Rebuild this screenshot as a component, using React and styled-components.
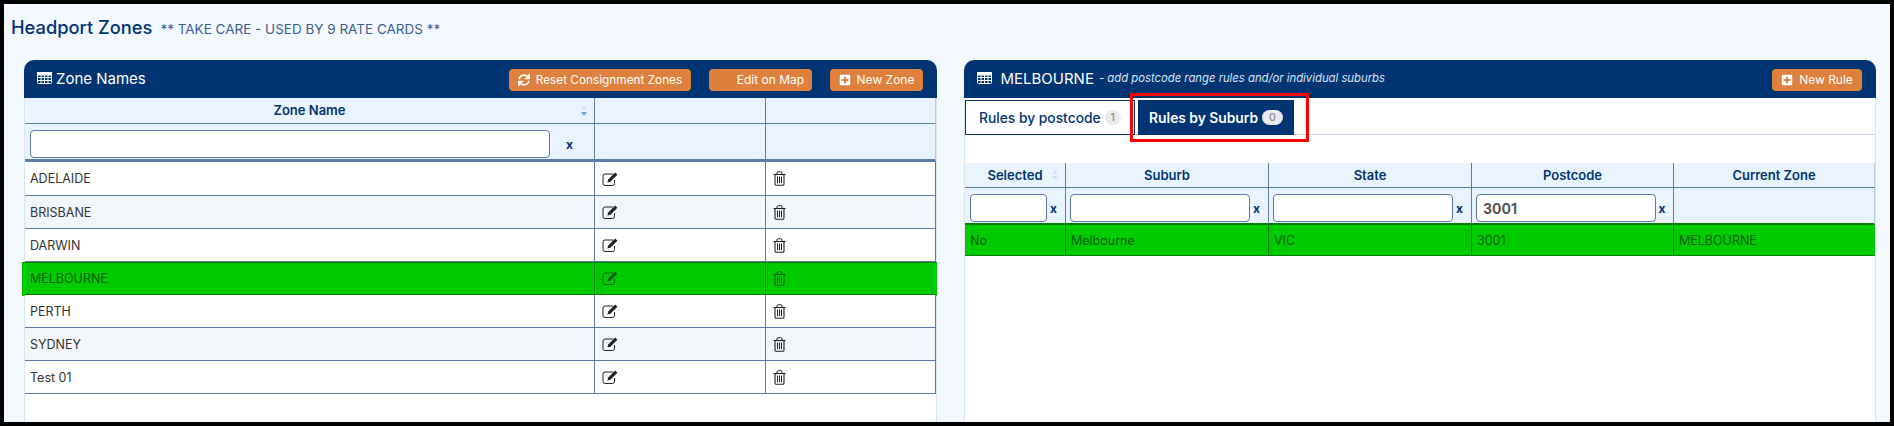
import React from "react";
import styled, { createGlobalStyle } from "styled-components";
import { FaSync, FaPlusSquare } from "react-icons/fa";

const GlobalStyle = createGlobalStyle`
  html, body { margin: 0; padding: 0; }
  body { font-family: Inter, "Noto Sans", sans-serif; }
  * { box-sizing: border-box; }
`;

const navy = "#003473";
const line = "#5b7ba8";
const green = "#00cb00";
const darkGreen = "#0a7a0a";

const Page = styled.div`
  width: 1894px;
  height: 426px;
  border: 4px solid #000;
  background: #f4f8ff;
  overflow: hidden;
  display: flex;
  flex-direction: column;
`;

const TitleBar = styled.div`
  height: 56px;
  padding: 12px 0 0 7px;
  display: flex;
  align-items: baseline;
  gap: 8px;
`;

const PageTitle = styled.h1`
  margin: 0;
  font-size: 18.3px;
  font-weight: 500;
  color: ${navy};
`;

const Warning = styled.span`
  font-size: 13.5px;
  font-weight: 400;
  color: #3b5f8f;
`;

const Panels = styled.div`
  flex: 1;
  display: flex;
  gap: 27px;
  padding-left: 20px;
  min-height: 0;
`;

const Panel = styled.section`
  width: ${(p) => p.$width}px;
  background: #fff;
  border-radius: 10px 10px 0 0;
  position: relative;
`;

const PanelHead = styled.header`
  height: 38px;
  background: ${navy};
  border-radius: 10px 10px 0 0;
  display: flex;
  align-items: center;
  color: #fff;
  padding: 0 14px 0 13px;
`;

const PanelTitle = styled.div`
  font-size: 15px;
  font-weight: 400;
  display: flex;
  align-items: center;
  gap: ${(p) => p.$gap}px;
  margin: -2px auto 0 0;
`;

const PanelNote = styled.em`
  font-size: 11.3px;
  font-weight: 400;
  margin-left: 5px;
  color: #dbe8f8;
`;

const ActionButton = styled.button`
  height: 22px;
  width: ${(p) => p.$width}px;
  margin: 1px 0 0 ${(p) => p.$gap || 0}px;
  border: 0;
  border-radius: 4px;
  background: #df813c;
  color: #fff;
  font: 400 12px Inter, sans-serif;
  display: flex;
  align-items: center;
  justify-content: center;
  gap: 6px;
  padding: 0;
  svg { font-size: 12px; }
`;

const ResetLabel = styled.span`
  font-size: 11.8px;
`;

const IconGap = styled.span`
  width: 14px;
`;

const Body = styled.div`
  border-left: 1px solid #dbe4f0;
  border-right: 1px solid #dbe4f0;
  height: 100%;
`;

const Row = styled.div`
  display: grid;
  grid-template-columns: ${(p) => p.$cols};
`;

const HeadCell = styled.div`
  height: ${(p) => p.$height}px;
  background: #e9f4fe;
  border-right: 1px solid ${line};
  border-bottom: 1px solid ${line};
  color: ${navy};
  font-size: 13px;
  font-weight: 600;
  display: flex;
  align-items: center;
  justify-content: center;
  position: relative;
  padding: 0 5px 1px;
  &:last-child { border-right-color: #b9c8dc; }
`;

const FilterCell = styled(HeadCell)`
  justify-content: space-between;
  padding: 5px 5px 0 4px;
  border-bottom: ${(p) => p.$thick}px solid ${(p) => p.$lineColor || line};
  &:first-child { padding-left: 5px; }
`;

const SortMark = styled.span`
  position: absolute;
  right: 7px;
  top: 50%;
  margin-top: -5px;
  width: 6px;
  height: 10px;
  &::before, &::after {
    content: "";
    position: absolute;
    left: 0;
    border-left: 3px solid transparent;
    border-right: 3px solid transparent;
  }
  &::before { top: 0; border-bottom: 4px solid #d6e2f0; }
  &::after { bottom: 0; border-top: 4px solid ${(p) => p.$down}; }
`;

const FilterInput = styled.input`
  width: ${(p) => p.$width}px;
  height: 28px;
  flex: none;
  border: 1px solid ${line};
  border-radius: 4px;
  background: #fff;
  padding: 0 6px;
  font: 700 14px Inter, sans-serif;
  color: #555;
  outline: none;
`;

const Clear = styled.span`
  font-size: 12px;
  font-weight: 700;
  color: ${navy};
  margin: 0 auto;
`;

const DataRow = styled(Row)`
  height: ${(p) => p.$height}px;
  background: ${(p) => (p.$selected ? green : p.$alt ? "#f2f7fc" : "#fff")};
  margin: ${(p) => (p.$bleed ? "0 -1px 0 -3px" : 0)};
  padding-left: ${(p) => (p.$bleed ? 3 : 0)}px;
  position: relative;
  box-shadow: ${(p) => (p.$bleed ? `inset 0 1px 0 ${darkGreen}, 0 1px 0 ${green}` : "none")};
`;

const DataCell = styled.div`
  border-right: 1px solid ${(p) => (p.$selected ? darkGreen : line)};
  border-bottom: 1px solid ${(p) => (p.$selected ? darkGreen : line)};
  font-size: 12.5px;
  color: ${(p) => (p.$selected ? "#075f07" : "#333")};
  display: flex;
  align-items: center;
  padding-left: ${(p) => (p.$icon ? 7 : 5)}px;
  svg { color: ${(p) => (p.$selected ? "#075f07" : "#222")}; }
  &:last-child { border-right-width: ${(p) => (p.$selected ? 0 : 1)}px; }
`;

const Tabs = styled.div`
  display: flex;
  gap: 3px;
  height: 37px;
  padding-top: 2px;
  border-bottom: 1px solid #ccd6e6;
`;

const Tab = styled.div`
  width: ${(p) => p.$width}px;
  height: 35px;
  display: flex;
  align-items: center;
  justify-content: center;
  gap: 4px;
  font-size: 13.8px;
  font-weight: ${(p) => (p.$active ? 600 : 500)};
  background: ${(p) => (p.$active ? navy : "#fff")};
  color: ${(p) => (p.$active ? "#fff" : navy)};
  border: 1px solid ${navy};
`;

const Count = styled.span`
  padding: 0 ${(p) => p.$pad}px;
  height: 15px;
  border-radius: 8px;
  background: #e9ebee;
  color: #888;
  font-size: 10.5px;
  font-weight: 500;
  line-height: 15px;
  text-align: center;
`;

const Spacer = styled.div`
  height: 28px;
`;

const Callout = styled.div`
  position: absolute;
  left: 166px;
  top: 33px;
  width: 179px;
  height: 49px;
  border: 3px solid #f00;
  pointer-events: none;
`;

const TableIcon = () => (
  <svg width="15" height="12" viewBox="0 0 15 12" fill="none" stroke="currentColor" strokeWidth="1">
    <rect x="0.5" y="0.5" width="14" height="11" rx="1" />
    <rect x="0.5" y="0.5" width="14" height="2.5" fill="currentColor" />
    <path d="M0 5.5H15M0 8.5H15M4 3V12M7.5 3V12M11 3V12" />
  </svg>
);

const EditIcon = () => (
  <svg width="16" height="14" viewBox="0 0 16 14">
    <path d="M11 2H3a2 2 0 0 0-2 2v7.5a2 2 0 0 0 2 2h7.5a2 2 0 0 0 2-2V8" fill="none" stroke="currentColor" strokeWidth="1" />
    <path d="M13.2 0.6l2.2 2.2-7 7-3 .8.8-3z" fill="currentColor" />
  </svg>
);

const TrashIcon = () => (
  <svg width="13" height="15" viewBox="0 0 13 15" fill="none" stroke="currentColor">
    <path d="M0.5 3.5H12.5" strokeWidth="1.1" />
    <path d="M4 3.5V2a1.3 1.3 0 0 1 1.3-1.3h2.4A1.3 1.3 0 0 1 9 2v1.5" strokeWidth="1" />
    <path d="M2 3.5V13a1.3 1.3 0 0 0 1.3 1.3h6.4A1.3 1.3 0 0 0 11 13V3.5" strokeWidth="1.1" />
    <path d="M4.5 5.5V12.2M6.5 5.5V12.2M8.5 5.5V12.2" strokeWidth="1" />
  </svg>
);

const zoneCols = "570px 171px 1fr";
const ruleCols = "101px 203px 203px 202px 1fr";
const zones = ["ADELAIDE", "BRISBANE", "DARWIN", "MELBOURNE", "PERTH", "SYDNEY", "Test 01"];

const filters = [
  { width: 77, value: "" },
  { width: 180, value: "" },
  { width: 180, value: "" },
  { width: 180, value: "3001" },
];

const App = function () {
  return (
    <>
      <GlobalStyle />
      <Page>
        <TitleBar>
          <PageTitle>Headport Zones</PageTitle>
          <Warning>** TAKE CARE - USED BY 9 RATE CARDS **</Warning>
        </TitleBar>
        <Panels>
          <Panel $width={913}>
            <PanelHead>
              <PanelTitle $gap={4}><TableIcon /> Zone Names</PanelTitle>
              <ActionButton $width={182}><FaSync /> <ResetLabel>Reset Consignment Zones</ResetLabel></ActionButton>
              <ActionButton $width={103} $gap={18}><IconGap /> Edit on Map</ActionButton>
              <ActionButton $width={93} $gap={18}><FaPlusSquare /> New Zone</ActionButton>
            </PanelHead>
            <Body>
              <Row $cols={zoneCols}>
                <HeadCell $height={26}>Zone Name<SortMark $down="#6f9fdc" /></HeadCell>
                <HeadCell $height={26} />
                <HeadCell $height={26} />
              </Row>
              <Row $cols={zoneCols}>
                <FilterCell $height={38} $thick={3}>
                  <FilterInput $width={520} />
                  <Clear>x</Clear>
                </FilterCell>
                <FilterCell $height={38} $thick={3} />
                <FilterCell $height={38} $thick={3} />
              </Row>
              {zones.map((zone, idx) => {
                const selected = zone === "MELBOURNE";
                return (
                  <DataRow
                    key={zone}
                    $cols={zoneCols}
                    $height={idx === 0 ? 34 : 33}
                    $selected={selected}
                    $bleed={selected}
                    $alt={idx % 2 === 1}
                  >
                    <DataCell $selected={selected}>{zone}</DataCell>
                    <DataCell $selected={selected} $icon><EditIcon /></DataCell>
                    <DataCell $selected={selected} $icon><TrashIcon /></DataCell>
                  </DataRow>
                );
              })}
            </Body>
          </Panel>
          <Panel $width={912}>
            <PanelHead>
              <PanelTitle $gap={0}>
                <TableIcon />&nbsp;&nbsp;MELBOURNE
                <PanelNote>- add postcode range rules and/or individual suburbs</PanelNote>
              </PanelTitle>
              <ActionButton $width={90}><FaPlusSquare /> New Rule</ActionButton>
            </PanelHead>
            <Body>
              <Tabs>
                <Tab $width={170}>Rules by postcode <Count $pad={6}>1</Count></Tab>
                <Tab $width={156} $active>Rules by Suburb <Count $pad={7}>0</Count></Tab>
              </Tabs>
              <Spacer />
              <Row $cols={ruleCols}>
                <HeadCell $height={25}>Selected<SortMark $down="#d6e2f0" /></HeadCell>
                <HeadCell $height={25}>Suburb</HeadCell>
                <HeadCell $height={25}>State</HeadCell>
                <HeadCell $height={25}>Postcode</HeadCell>
                <HeadCell $height={25}>Current Zone</HeadCell>
              </Row>
              <Row $cols={ruleCols}>
                {filters.map((f, idx) => (
                  <FilterCell key={idx} $height={37} $thick={2} $lineColor={darkGreen}>
                    <FilterInput $width={f.width} defaultValue={f.value} />
                    <Clear>x</Clear>
                  </FilterCell>
                ))}
                <FilterCell $height={37} $thick={2} $lineColor={darkGreen} />
              </Row>
              <DataRow $cols={ruleCols} $height={31} $selected>
                <DataCell $selected>No</DataCell>
                <DataCell $selected>Melbourne</DataCell>
                <DataCell $selected>VIC</DataCell>
                <DataCell $selected>3001</DataCell>
                <DataCell $selected>MELBOURNE</DataCell>
              </DataRow>
            </Body>
            <Callout />
          </Panel>
        </Panels>
      </Page>
    </>
  );
};

export default App;
